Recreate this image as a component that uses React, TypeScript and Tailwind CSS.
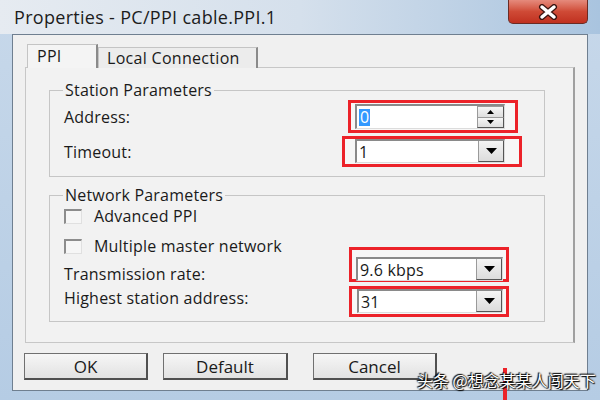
import React from "react";

/* small dropdown arrow used in combo boxes */
function DownArrow() {
  return (
    <svg width="11" height="6" viewBox="0 0 11 6">
      <path d="M0 0h11L5.5 6z" fill="#000" />
    </svg>
  );
}

function ComboBox({ value }: { value: string }) {
  return (
    <div className="flex h-[24px] w-full border-t-2 border-l-2 border-[#8a8a8a] border-r border-b border-r-[#dcdcdc] border-b-[#dcdcdc] bg-white">
      <div className="flex-1 flex items-center pl-[2px] text-[16px] text-[#1a1a1a]">{value}</div>
      <div className="w-[26px] flex items-center justify-center bg-gradient-to-b from-[#f4f4f4] to-[#dcdcdc] border-l border-[#9a9a9a] border-r border-b border-r-[#555] border-b-[#555]">
        <DownArrow />
      </div>
    </div>
  );
}

function Highlight({ className, children }: { className: string; children: React.ReactNode }) {
  return <div className={`border-[3px] border-[#ec2229] bg-[#f7f7f7] ${className}`}>{children}</div>;
}

function CheckRow({ label, className }: { label: string; className: string }) {
  return (
    <div className={`flex items-center ${className}`}>
      <div className="w-[18px] h-[15px] border-t-2 border-l-2 border-[#8c8c8c] border-r border-b border-r-[#e0e0e0] border-b-[#e0e0e0] bg-[#f6f6f6]" />
      <span className="ml-[12px]">{label}</span>
    </div>
  );
}

function DlgButton({ label, className }: { label: string; className: string }) {
  return (
    <button className={`h-[27px] border border-[#707070] border-r-2 border-b-2 border-r-[#505050] border-b-[#505050] bg-gradient-to-b from-[#f6f6f6] to-[#e2e2e2] text-[17px] text-[#1a1a1a] ${className}`}>
      {label}
    </button>
  );
}

export default function App() {
  return (
    <div className="relative w-[600px] h-[400px] overflow-hidden flex flex-col bg-gradient-to-b from-[#c7d8ea] to-[#b5cce4] font-['Open_Sans','Liberation_Sans',sans-serif] text-[#1a1a1a]">
      {/* ── Title bar ── */}
      <div className="relative h-[34px] flex items-center pl-[14px] bg-gradient-to-r from-[#e6ebf1] via-[#d5e0ec] to-[#a9c4df]">
        <span className="text-[18px] tracking-[0.3px] text-[#1c1c1c]">Properties - PC/PPI cable.PPI.1</span>
        <div className="absolute right-[12px] top-0 w-[80px] h-[24px] rounded-b-[5px] border border-t-0 border-[#6a2b24] bg-gradient-to-b from-[#e58a7c] via-[#cf4a36] to-[#c0301f] flex items-center justify-center">
          <svg width="22" height="16" viewBox="0 0 22 16">
            <path d="M5 3l12 10M17 3L5 13" stroke="#3a1410" strokeWidth="6" strokeLinecap="round" />
            <path d="M5 3l12 10M17 3L5 13" stroke="#fff" strokeWidth="3.5" strokeLinecap="round" />
          </svg>
        </div>
      </div>

      {/* ── Body ── */}
      <div className="flex-1 flex pl-[12px] pr-[12px] pb-[9px]">
        <div className="flex-1 flex flex-col bg-[#f0f0f0] border border-[#6f7f90]">
          {/* Tab strip */}
          <div className="flex items-end mt-[9px] ml-[14px] h-[24px] relative z-10 text-[16px] tracking-[0.3px]">
            <div className="w-[71px] h-[24px] border border-b-0 border-[#c4c4c4] border-r-2 border-r-[#8a8a8a] bg-[#f4f4f4] pl-[9px] leading-[22px]">PPI</div>
            <div className="w-[160px] h-[21px] border border-b-0 border-[#c4c4c4] border-r-2 border-r-[#8a8a8a] bg-[#ececec] pl-[8px] leading-[20px]">Local Connection</div>
          </div>

          {/* Tab panel */}
          <div className="mx-[12px] -mt-px border border-[#c7c7c7] border-r-2 border-r-[#a0a0a0] bg-[#f2f2f2] pt-[14px] pl-[23px] pr-[28px] pb-[20px] text-[16px] tracking-[0.2px]">
            {/* Station Parameters */}
            <fieldset className="border border-[#c6c6c6] pb-[9px]">
              <legend className="ml-[13px] px-[2px] leading-[16px]">Station Parameters</legend>
              <div className="flex items-center mt-[2px]">
                <span className="flex-1 pl-[14px]">Address:</span>
                <Highlight className="w-[170px] h-[33px] mr-[26px] pl-[4px] pr-[10px] pt-[1px]">
                  <div className="flex h-[25px] border-t-2 border-l-2 border-[#8a8a8a] border-r border-b border-r-[#dcdcdc] border-b-[#dcdcdc] bg-white">
                    <div className="flex-1 flex items-center pl-[2px]">
                      <span className="bg-[#3399ff] text-white px-[1px] leading-[17px]">0</span>
                    </div>
                    <div className="w-[27px] flex flex-col">
                      <div className="flex-1 flex items-center justify-center bg-gradient-to-b from-[#f6f6f6] to-[#dedede] border border-[#9a9a9a] border-r-[#555]">
                        <svg width="7" height="4" viewBox="0 0 7 4"><path d="M0 4h7L3.5 0z" fill="#000" /></svg>
                      </div>
                      <div className="flex-1 flex items-center justify-center bg-gradient-to-b from-[#f6f6f6] to-[#dedede] border border-t-0 border-[#9a9a9a] border-r-[#555] border-b-[#555]">
                        <svg width="7" height="4" viewBox="0 0 7 4"><path d="M0 0h7L3.5 4z" fill="#000" /></svg>
                      </div>
                    </div>
                  </div>
                </Highlight>
              </div>
              <div className="flex items-center mt-[3px]">
                <span className="flex-1 pl-[14px]">Timeout:</span>
                <Highlight className="w-[180px] h-[31px] mr-[22px] pl-[10px] pr-[14px]">
                  <ComboBox value="1" />
                </Highlight>
              </div>
            </fieldset>

            {/* Network Parameters */}
            <fieldset className="mt-[10px] border border-[#c6c6c6] pb-[4px]">
              <legend className="ml-[13px] px-[2px] leading-[16px]">Network Parameters</legend>
              <div className="flex">
                <div className="flex-1 flex flex-col pl-[14px] pb-[7px]">
                  <CheckRow label="Advanced PPI" className="h-[24px] mt-[1px]" />
                  <CheckRow label="Multiple master network" className="h-[24px] mt-[6px]" />
                  <div className="h-[24px] mt-[4px] flex items-center">Transmission rate:</div>
                  <div className="h-[24px] flex items-center">Highest station address:</div>
                </div>
                <div className="flex flex-col justify-end gap-[4px] mr-[35px]">
                  <Highlight className="w-[160px] h-[35px] pl-[4px] pr-[3px] pt-[7px]">
                    <ComboBox value="9.6 kbps" />
                  </Highlight>
                  <Highlight className="w-[160px] h-[31px] pl-[5px] pr-[3px] pt-[0px]">
                    <ComboBox value="31" />
                  </Highlight>
                </div>
              </div>
            </fieldset>
          </div>

          {/* Buttons */}
          <div className="flex mt-[10px] ml-[11px]">
            <DlgButton label="OK" className="w-[124px]" />
            <DlgButton label="Default" className="w-[125px] ml-[15px]" />
            <DlgButton label="Cancel" className="w-[124px] ml-[25px]" />
          </div>
        </div>
      </div>

      {/* watermark + stray mark over the frame */}
      <div className="absolute left-[503px] top-[368px] w-[4px] h-[32px] bg-[#ec2229]" />
      <div className="absolute left-[417px] top-[369px] whitespace-nowrap leading-[22px] text-[16px] text-white font-['Noto_Sans_CJK_SC',sans-serif] [text-shadow:0_0_2px_#000,1px_1px_1px_#000,-1px_-1px_1px_#000]">
        头条 @想念某某人闯天下
      </div>
    </div>
  );
}
